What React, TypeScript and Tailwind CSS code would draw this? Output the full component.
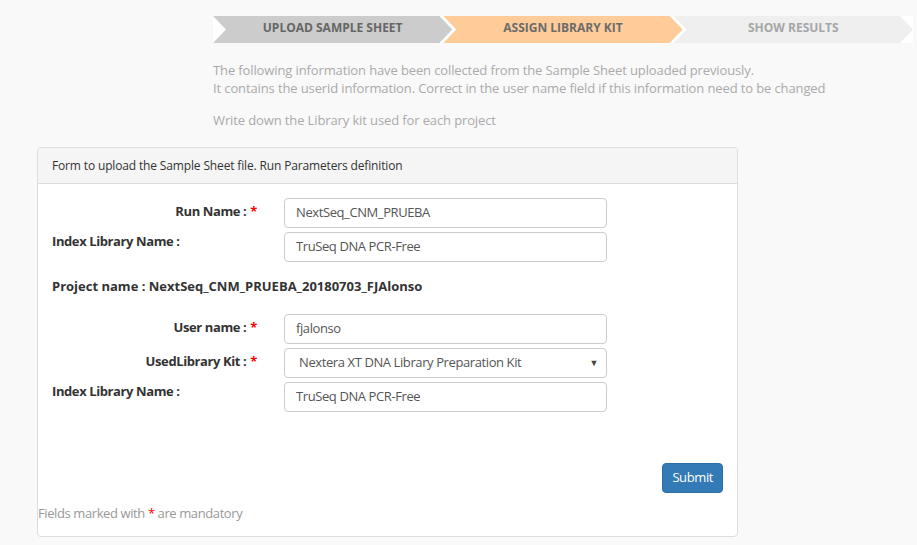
import React from 'react';

const steps = [
  { label: 'UPLOAD SAMPLE SHEET', bg: 'bg-[#cccccc]', text: 'text-[#666666]' },
  { label: 'ASSIGN LIBRARY KIT', bg: 'bg-[#ffcc99]', text: 'text-[#6b6b6b]' },
  { label: 'SHOW RESULTS', bg: 'bg-[#efefef]', text: 'text-[#a6a6a6]' },
];

const Req = () => <span className="text-[#ff0000] ml-[4px]">*</span>;

const Field = ({ value, select }: { value: string; select?: boolean }) => (
  <div className="w-[323px] h-[30px] border border-[#cccccc] rounded-[4px] bg-white flex items-center justify-between pl-[11px] pr-[8px] text-[13px] text-[#555555]">
    <span className={select ? 'pl-[3px]' : ''}>{value}</span>
    {select && <span className="text-[9px] text-[#444]">▼</span>}
  </div>
);

export default function App() {
  return (
    <div
      className="min-h-[545px] w-[917px] bg-[#f9f9f9] tracking-[-0.4px]"
      style={{ fontFamily: '"Open Sans", "Liberation Sans", sans-serif' }}
    >
      <div className="pl-[213px] pt-[16px]">
        <div className="flex w-[700px] h-[27px] bg-white">
          {steps.map((s, i) => (
            <div
              key={s.label}
              className={`flex-1 ${i > 0 ? '-ml-[9px]' : ''} ${s.bg} ${s.text} flex items-center justify-center pb-[3px] text-[12px] font-bold tracking-[0px] [clip-path:polygon(0_0,calc(100%-13px)_0,100%_50%,calc(100%-13px)_100%,0_100%,13px_50%)]`}
            >
              {s.label}
            </div>
          ))}
        </div>
      </div>

      <div className="pl-[213px] pt-[18px] text-[13px] text-[#aaaaaa] leading-[18px] tracking-[-0.12px]">
        <p>The following information have been collected from the Sample Sheet uploaded previously.</p>
        <p>It contains the userid information. Correct in the user name field if this information need to be changed</p>
        <p className="mt-[14px]">Write down the Library kit used for each project</p>
      </div>

      <div className="ml-[37px] mt-[18px] w-[701px] h-[390px] border border-[#dddddd] rounded-[4px] bg-white flex flex-col">
        <div className="h-[36px] bg-[#f5f5f5] border-b border-[#dddddd] rounded-t-[4px] flex items-center pl-[14px] text-[12px] text-[#333333] tracking-[-0.15px]">
          Form to upload the Sample Sheet file. Run Parameters definition
        </div>
        <div className="flex-1 flex flex-col pt-[14px] pl-[14px] pr-[14px] text-[13px] text-[#333333]">
          <div className="flex">
            <div className="w-[232px] pr-[27px] text-right font-bold pt-[4px]">Run Name :<Req /></div>
            <Field value="NextSeq_CNM_PRUEBA" />
          </div>
          <div className="flex mt-[4px]">
            <div className="w-[232px] font-bold">Index Library Name :</div>
            <Field value="TruSeq DNA PCR-Free" />
          </div>
          <div className="font-bold mt-[15px] leading-[18px] tracking-[0px]">
            Project name : NextSeq_CNM_PRUEBA_20180703_FJAlonso
          </div>
          <div className="flex mt-[19px]">
            <div className="w-[232px] pr-[27px] text-right font-bold pt-[4px]">User name :<Req /></div>
            <Field value="fjalonso" />
          </div>
          <div className="flex mt-[4px]">
            <div className="w-[232px] pr-[27px] text-right font-bold pt-[4px]">UsedLibrary Kit :<Req /></div>
            <Field value="Nextera XT DNA Library Preparation Kit" select />
          </div>
          <div className="flex mt-[4px]">
            <div className="w-[232px] font-bold">Index Library Name :</div>
            <Field value="TruSeq DNA PCR-Free" />
          </div>
          <div className="flex justify-end mt-[51px]">
            <button className="h-[30px] px-[9px] bg-[#337ab7] border border-[#2e6da4] rounded-[4px] text-white text-[13px]">
              Submit
            </button>
          </div>
          <div className="-ml-[14px] mt-[11px] text-[13px] text-[#999999]">
            Fields marked with <span className="text-[#ff0000]">*</span> are mandatory
          </div>
        </div>
      </div>
    </div>
  );
}
